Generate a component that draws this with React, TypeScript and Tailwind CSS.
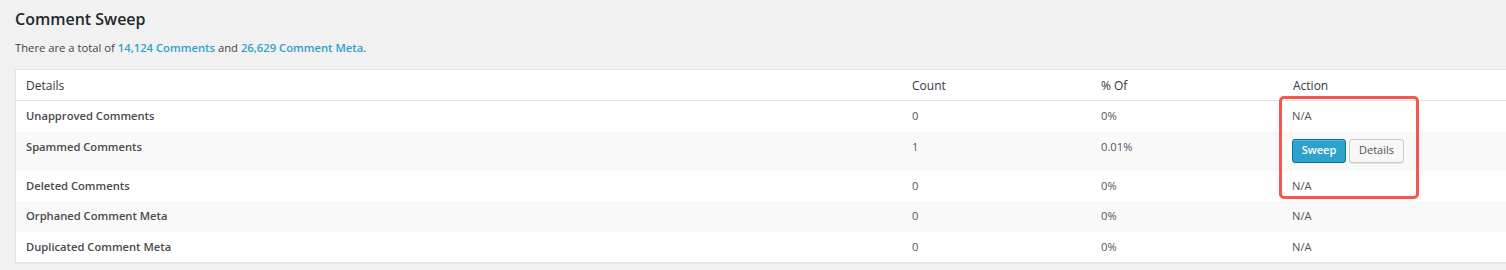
const rows = [
  { label: "Unapproved Comments", count: "0", pct: "0%", action: false },
  { label: "Spammed Comments", count: "1", pct: "0.01%", action: true },
  { label: "Deleted Comments", count: "0", pct: "0%", action: false },
  { label: "Orphaned Comment Meta", count: "0", pct: "0%", action: false },
  { label: "Duplicated Comment Meta", count: "0", pct: "0%", action: false },
]

export default function App() {
  return (
    <div
      className="w-[1506px] h-[270px] overflow-hidden bg-[#f1f1f1] pl-[15px] text-[#444]"
      style={{ fontFamily: '"Open Sans", "Liberation Sans", sans-serif' }}
    >
      <h3 className="pt-[8px] text-[16px] leading-[22px] font-semibold text-[#23282d]">Comment Sweep</h3>
      <p className="mt-[10px] text-[11.25px] leading-[15px] text-[#444]">
        There are a total of <a className="font-semibold text-[#2ea2cc]">14,124 Comments</a> and{" "}
        <a className="font-semibold text-[#2ea2cc]">26,629 Comment Meta</a>.
      </p>

      {/* Sweep table */}
      <div className="relative mt-[14px] w-[1500px] border border-r-0 border-[#e5e5e5] bg-white shadow-[0_1px_1px_rgba(0,0,0,0.04)] text-[11.2px] leading-[14.5px]">
        <div className="grid grid-cols-[886px_189px_192px_1fr] border-b border-[#e1e1e1] text-[12px] leading-[15px] text-[#32373c]">
          <div className="px-[10px] pt-[8px] pb-[7px]">Details</div>
          <div className="px-[10px] pt-[8px] pb-[7px]">Count</div>
          <div className="px-[10px] pt-[8px] pb-[7px]">% Of</div>
          <div className="px-[10px] pt-[8px] pb-[7px]">Action</div>
        </div>

        {rows.map((row, i) => (
          <div
            key={row.label}
            className={`grid grid-cols-[886px_189px_192px_1fr] text-[#555] ${i % 2 === 1 ? "bg-[#f9f9f9]" : "bg-white"}`}
          >
            <div className="px-[10px] py-[8px] font-semibold text-[#4a4a4a]">{row.label}</div>
            <div className="px-[10px] py-[8px]">{row.count}</div>
            <div className="px-[10px] py-[8px]">{row.pct}</div>
            <div className="px-[9px] py-[8px]">
              {row.action ? (
                <div className="flex gap-[3px] -mt-[1px]">
                  <button className="h-[24px] w-[54px] rounded-[3px] border border-[#0074a2] bg-[#2ea2cc] text-[11px] font-semibold text-white shadow-[inset_0_1px_0_rgba(120,200,230,0.5)]">
                    Sweep
                  </button>
                  <button className="h-[24px] w-[55px] rounded-[3px] border border-[#cccccc] bg-[#f7f7f7] text-[11px] text-[#555] shadow-[0_1px_0_rgba(0,0,0,0.08)]">
                    Details
                  </button>
                </div>
              ) : (
                "N/A"
              )}
            </div>
          </div>
        ))}

        {/* annotation box */}
        <div className="pointer-events-none absolute left-[1263px] top-[26px] h-[103px] w-[140px] rounded-[5px] border-[3px] border-[#f5574a]" />
      </div>
    </div>
  )
}
